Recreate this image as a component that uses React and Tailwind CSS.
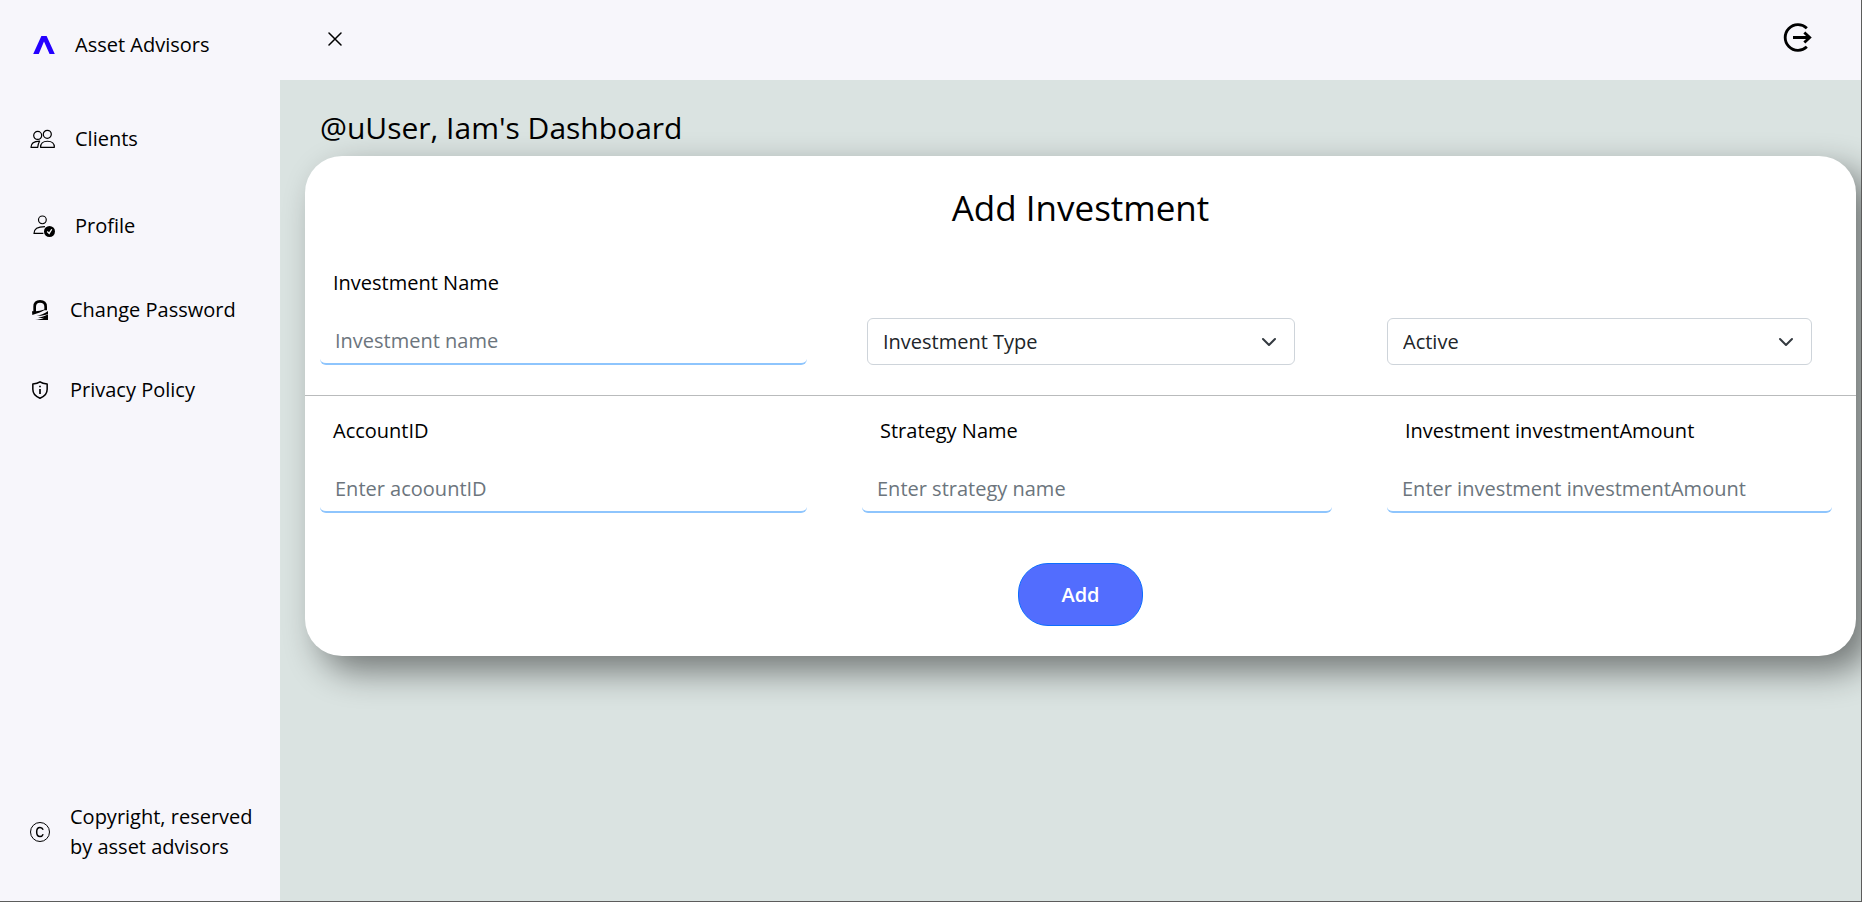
import React from "react";

function LogoMark() {
  return (
    <svg width="22" height="18" viewBox="0 0 66 55" fill="#2400ff" aria-hidden="true">
      <path d="M0 55 25 0h16l25 55H50L33 17 17 55z" />
    </svg>
  );
}

function PeopleIcon() {
  return (
    <svg width="25" height="20" viewBox="0 0 78 60" fill="none" stroke="#000" strokeWidth="3.8" aria-hidden="true">
      <circle cx="24" cy="19" r="12.5" />
      <circle cx="54" cy="15.5" r="12.5" />
      <path d="M33 56C33 43 41 37 54.5 37S76 43 76 56z" strokeLinejoin="round" />
      <path d="M24 56H3C3 43 12 37 30 36.5C27 42 25 48 24 56z" strokeLinejoin="round" />
    </svg>
  );
}

function ProfileIcon() {
  return (
    <svg width="22" height="22" viewBox="0 0 68 68" fill="none" stroke="#000" strokeWidth="3.6" aria-hidden="true">
      <circle cx="29" cy="15" r="12" />
      <path d="M32 57H3C3 43 14 36 37 36" strokeLinejoin="round" />
      <circle cx="51" cy="51" r="17" fill="#000" stroke="none" />
      <path d="m44 51 6 6 8-13" stroke="#fff" strokeWidth="4" />
    </svg>
  );
}

function LockIcon() {
  return (
    <svg width="16" height="20" viewBox="0 0 48 60" fill="#000" aria-hidden="true">
      <path d="M8 36V20C8 9 14 4 24 4s17 5 17 16v11" fill="none" stroke="#000" strokeWidth="8" />
      <path d="M0 34C16 34 31 31 45 26L28 35C19 39 9 42 1 45z" />
      <path d="M48 33C39 41 23 46 14 47C24 48 39 46 48 42z" />
      <path d="M48 43C39 49 27 52 18 53C27 54 31 54 37 53C27 58 19 58 9 60H48z" />
    </svg>
  );
}

function ShieldIcon() {
  return (
    <svg width="16" height="18" viewBox="0 0 48 54" fill="none" stroke="#000" strokeWidth="4.5" aria-hidden="true">
      <path d="M24 2.5C18 7 10 8.5 2.5 9V25C2.5 39 11 47 24 51.500C37 47 45.5 39 45.5 25V9C38 8.5 30 7 24 2.5z" strokeLinejoin="round" />
      <path d="M24 24v15M24 14v5" strokeWidth="5" />
    </svg>
  );
}

function CopyrightIcon() {
  return (
    <svg width="20" height="20" viewBox="0 0 60 60" fill="none" stroke="#000" aria-hidden="true">
      <circle cx="30" cy="30" r="28.5" strokeWidth="3" />
      <path d="M39.5 23.5C37.5 18.5 34 16.5 30 16.5C23 16.5 20 22 20 30S23 43.5 30 43.5C34 43.5 37.5 41.5 39.5 36.5" strokeWidth="4.5" />
    </svg>
  );
}

function LogoutIcon() {
  return (
    <svg width="29" height="29" viewBox="0 0 87 87" fill="none" stroke="#000" strokeWidth="8.5" aria-hidden="true">
      <path d="M71.5 15.5A38.5 38.5 0 1 0 71.5 71.5" />
      <path d="M30 43.500H80M64 28.5 80 43.5 64 58.5" />
    </svg>
  );
}

function NavItem({ icon, children, className }) {
  return (
    <a href="#" className={`flex items-center ${className}`}>
      {icon}
      <span>{children}</span>
    </a>
  );
}

function Field({ id, label, placeholder, labelClass = "pl-[13px]" }) {
  return (
    <div className="flex flex-col">
      <label htmlFor={id} className={`mb-[19px] leading-[30px] ${labelClass}`}>{label}</label>
      <input
        id={id}
        type="text"
        placeholder={placeholder}
        className="h-12 w-full rounded-md border-b-2 border-[#8ec5fd] bg-white px-[15px] outline-none placeholder:text-[#6c757d]"
      />
    </div>
  );
}

function Select({ label, options, className }) {
  return (
    <div className={`relative ${className}`}>
      <select aria-label={label} className="h-[47px] w-full appearance-none rounded-md border border-[#ced4da] bg-white px-[15px] text-[#212529]">
        {options.map((o) => (
          <option key={o}>{o}</option>
        ))}
      </select>
      <svg className="pointer-events-none absolute top-4 right-[18px]" width="16" height="16" viewBox="0 0 16 16" fill="none" stroke="#343a40" strokeWidth="2" strokeLinecap="round" strokeLinejoin="round" aria-hidden="true">
        <path d="m2 5 6 6 6-6" />
      </svg>
    </div>
  );
}

const columns = "grid grid-cols-[487fr_470fr_445fr] items-end gap-[55px] pl-[15px] pr-6";

export default function App() {
  return (
    <div className="flex min-h-screen border-r border-b border-[#5c5c5c] bg-[#dae3e1] font-['Open_Sans','Noto_Sans',sans-serif] text-[20px] leading-[30px] text-black">
      <aside className="flex w-[280px] shrink-0 flex-col bg-[#f7f6fb] pt-[30px] pb-[39px]">
        <NavItem icon={<LogoMark />} className="gap-5 pl-[33px]">Asset Advisors</NavItem>
        <nav className="mt-16 flex flex-col">
          <NavItem icon={<PeopleIcon />} className="mb-[57px] gap-5 pl-[30px]">Clients</NavItem>
          <NavItem icon={<ProfileIcon />} className="mb-[54px] gap-5 pl-[33px]">Profile</NavItem>
          <NavItem icon={<LockIcon />} className="mb-[50px] gap-[22px] pl-8">Change Password</NavItem>
          <NavItem icon={<ShieldIcon />} className="gap-[22px] pl-8">Privacy Policy</NavItem>
        </nav>
        <div className="mt-auto flex items-center gap-5 pl-[30px]">
          <CopyrightIcon />
          <p>Copyright, reserved<br />by asset advisors</p>
        </div>
      </aside>

      <div className="flex min-w-0 grow flex-col">
        <header className="flex h-20 items-center justify-between bg-[#f7f6fb] pr-[49px] pb-1 pl-12">
          <button type="button" aria-label="Close menu" className="pt-0.5">
            <svg width="14" height="14" viewBox="0 0 14 14" stroke="#000" strokeWidth="1.5" strokeLinecap="round" aria-hidden="true">
              <path d="M1 1l12 12M13 1 1 13" />
            </svg>
          </button>
          <button type="button" aria-label="Log out" className="pb-0.5"><LogoutIcon /></button>
        </header>

        <main className="grow overflow-hidden pt-[30px] pr-[5px] pb-20 pl-[25px]">
          <h1 className="pl-[15px] text-[30px] leading-9">@uUser, Iam's Dashboard</h1>
          <form className="mt-[10px] rounded-[37px] bg-white py-[30px] shadow-[15px_15px_35px_rgba(0,0,0,0.48)]" onSubmit={(e) => e.preventDefault()}>
            <h2 className="text-center text-[35px] leading-[44px]">Add Investment</h2>
            <div className={`mt-[38px] ${columns}`}>
              <Field id="name" label="Investment Name" placeholder="Investment name" />
              <Select label="Investment type" options={["Investment Type"]} className="mr-[37px] ml-[5px]" />
              <Select label="Status" options={["Active"]} className="mr-5" />
            </div>
            <hr className="mt-[30px] border-[#b9bbbc]" />
            <div className={`mt-5 ${columns}`}>
              <Field id="account" label="AccountID" placeholder="Enter acoountID" />
              <Field id="strategy" label="Strategy Name" placeholder="Enter strategy name" labelClass="pl-[18px]" />
              <Field id="amount" label="Investment investmentAmount" placeholder="Enter investment investmentAmount" labelClass="pl-[18px]" />
            </div>
            <div className="mt-[50px] flex justify-center">
              <button type="submit" className="h-[63px] w-[125px] rounded-[30px] border border-[#0d6efd] bg-[#526dfe] font-semibold text-white">Add</button>
            </div>
          </form>
        </main>
      </div>
    </div>
  );
}
